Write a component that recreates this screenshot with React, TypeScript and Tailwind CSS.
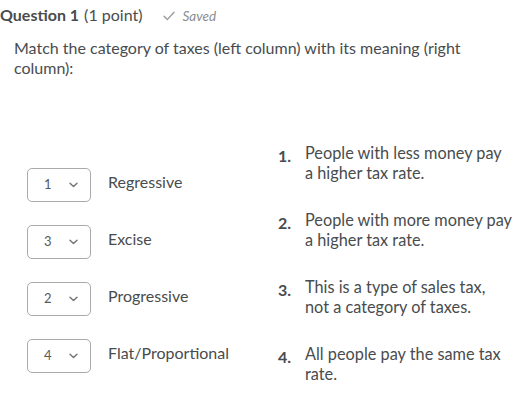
import React from "react";

const rows = [
  { v: "1", label: "Regressive" },
  { v: "3", label: "Excise" },
  { v: "2", label: "Progressive" },
  { v: "4", label: "Flat/Proportional" },
];

const answers = [
  "People with less money pay a higher tax rate.",
  "People with more money pay a higher tax rate.",
  "This is a type of sales tax, not a category of taxes.",
  "All people pay the same tax rate.",
];

function Chevron() {
  return (
    <svg width="9" height="6" viewBox="0 0 9 6" fill="none">
      <path d="M1 1.2 L4.5 4.5 L8 1.2" stroke="#6e7376" strokeWidth="1.4" strokeLinecap="round" strokeLinejoin="round" />
    </svg>
  );
}

export default function App() {
  return (
    <div className="w-[520px] h-[419px] bg-white overflow-hidden text-[#494c4e]" style={{ fontFamily: "Lato, 'Open Sans', sans-serif" }}>
      <div className="flex items-baseline pt-[3px] pl-0">
        <span className="text-[16px] font-bold text-[#494c4e]">Question 1</span>
        <span className="text-[16px] ml-[5px] text-[#494c4e]">(1 point)</span>
        <span className="ml-[21px] flex items-baseline text-[13.5px] italic text-[#8a8c8e]">
          <svg width="12" height="10" viewBox="0 0 12 10" className="mr-[7px] self-center" fill="none">
            <path d="M1 5.3 L4.3 8.6 L11 1.2" stroke="#9a9c9e" strokeWidth="1.4" strokeLinecap="round" strokeLinejoin="round" />
          </svg>
          Saved
        </span>
      </div>
      <p className="mt-[11px] pl-[14px] pr-[20px] text-[16px] leading-[20px]">
        Match the category of taxes (left column) with its meaning (right column):
      </p>
      <div className="mt-[67px] flex items-center h-[245px]">
        <div className="flex flex-col gap-[23px] pl-[27px] w-[278px] mt-[6px]">
          {rows.map((r) => (
            <div key={r.label} className="flex items-center h-[34px]">
              <div className="w-[64px] h-[34px] border border-[#a8abad] rounded-[5px] flex items-center justify-between pl-[16px] pr-[12px]">
                <span className="text-[13px] text-[#565a5c]">{r.v}</span>
                <Chevron />
              </div>
              <span className="ml-[17px] text-[16px] -mt-[6px]">{r.label}</span>
            </div>
          ))}
        </div>
        <ol className="flex flex-col gap-[27px] -mt-[8px]">
          {answers.map((a, i) => (
            <li key={i} className="flex text-[16.3px] leading-[20px]">
              <span className="w-[27px] shrink-0 font-bold text-[16px] pt-[3px]">{i + 1}.</span>
              <span className="w-[208px]">{a}</span>
            </li>
          ))}
        </ol>
      </div>
    </div>
  );
}
